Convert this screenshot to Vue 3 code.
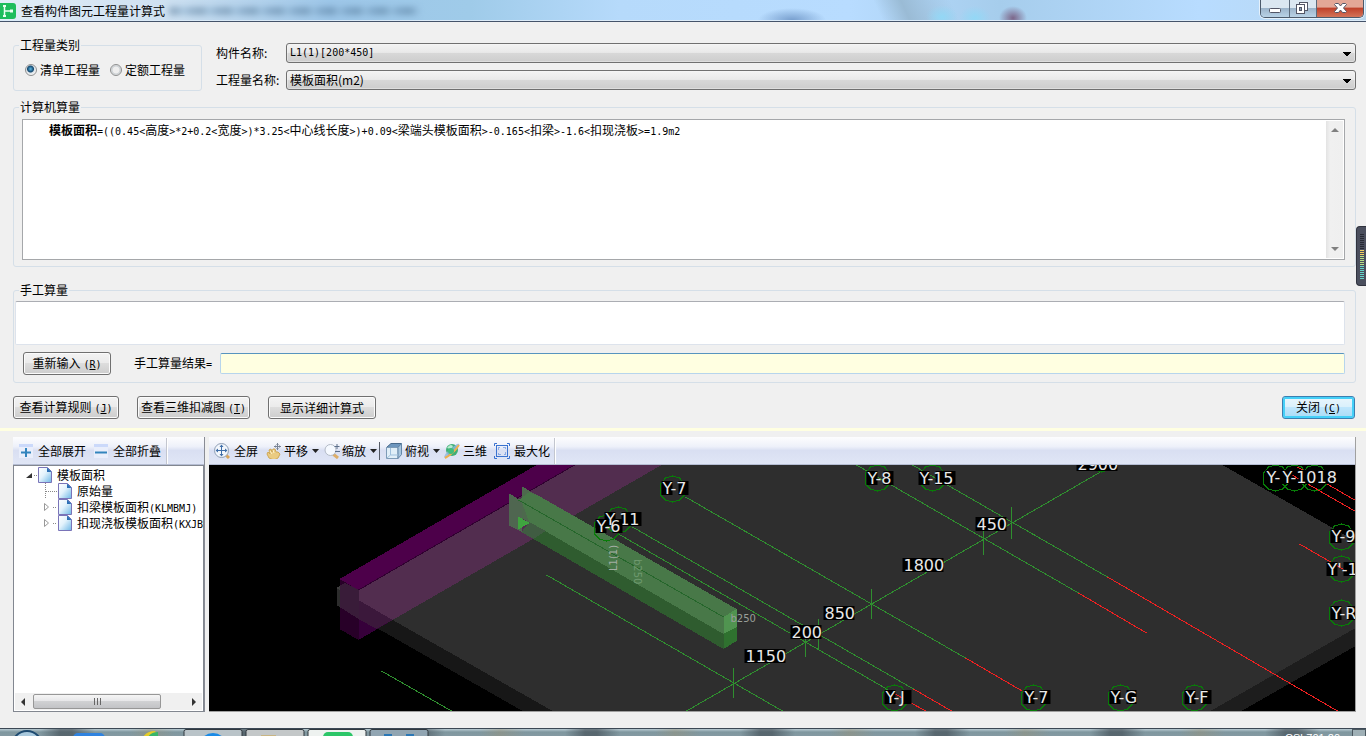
<script setup>
import { ref } from 'vue'

const kind = ref('list')
const component = ref('L1(1)[200*450]')
const quantity = ref('模板面积(m2)')
const manual = ref('')
const result = ref('')

// Splits a text into Latin and Chinese runs, so that each can take its own font.
function runs(text) {
  return (text.match(/[\x00-\x7f]+|[^\x00-\x7f]+/g) || []).map((t) => ({
    t,
    latin: t.charCodeAt(0) < 128
  }))
}

const formula = runs('=((0.45<高度>*2+0.2<宽度>)*3.25<中心线长度>)+0.09<梁端头模板面积>-0.165<扣梁>-1.6<扣现浇板>=1.9m2')

const tree = [
  { text: '原始量', leaf: true },
  { text: '扣梁模板面积(KLMBMJ)' },
  { text: '扣现浇板模板面积(KXJBMBMJ)' }
].map((n) => ({ ...n, parts: runs(n.text) }))

const greenLines = [
  [685, 497, 965, 658], [632, 527, 913, 689], [618, 534, 893, 693],
  [546, 575, 782, 711], [856, 465, 1078, 593], [912, 465, 1107, 577],
  [686, 711, 1112, 465],
  [733, 668, 733, 698], [805, 627, 805, 657], [818, 619, 818, 649],
  [871, 589, 871, 619], [983, 525, 983, 555], [1011, 507, 1011, 539]
]
const redLines = [
  [965, 658, 1032, 697], [913, 689, 951, 711], [893, 693, 925, 711],
  [1078, 593, 1146, 633], [1107, 577, 1337, 711], [1299, 544, 1356, 577],
  [1297, 467, 1356, 501], [1288, 473, 1356, 512]
]
const bubbles = [
  [673, 489], [619, 520], [607, 528], [878, 478], [933, 478], [895, 698], [1034, 698],
  [1121, 698], [1195, 698], [1342, 613], [1342, 537], [1342, 569],
  [1276, 478], [1295, 478], [1315, 478], [1102, 459]
]
const hex = (cx, cy) =>
  [[0, -13], [7, -11], [12, -5], [12, 6], [7, 11], [0, 13], [-7, 11], [-12, 6], [-12, -5], [-7, -11]]
    .map(([x, y]) => `${cx + x},${cy + y}`).join(' ')

// Each label: text, left edge, baseline
const labels = [
  ['Y-7', 663, 494], ['Y-11', 606, 525], ['Y-6', 597, 532], ['Y-8', 868, 484], ['Y-15', 920, 484],
  ['2900', 1078, 470], ['450', 977, 530], ['1800', 904, 571], ['850', 825, 619], ['200', 792, 638],
  ['1150', 746, 662], ['Y-J', 886, 703], ['Y-7', 1025, 703], ['Y-G', 1111, 703], ['Y-F', 1186, 703],
  ['Y-', 1267, 483], ['Y-1018', 1283, 483], ['Y-9', 1332, 542], ["Y'-11", 1328, 575], ['Y-R', 1332, 619]
]
function plates(text, x, y) {
  const i = text.indexOf('-')
  if (i < 0) return [{ x: x - 1, y: y - 13, w: text.length * 10 + 1 }]
  const head = { x: x - 1, y: y - 13, w: 11 }
  const rest = text.length - i - 1
  return rest ? [head, { x: x + 16, y: y - 13, w: rest * 10 }] : [head]
}
</script>

<template>
  <div class="window">
    <header class="titlebar">
      <svg class="logo" viewBox="0 0 16 16" width="16" height="16" aria-hidden="true">
        <rect x="-2" width="18" height="16" rx="3" fill="#1ebd5c" />
        <path d="M4.500 3v10M5 8h6" stroke="#eafff0" stroke-width="1.500" fill="none" />
        <path d="M3 2h3v2H3zM3 12h3v2H3zM10 6.500h3v3h-3z" fill="#eafff0" />
      </svg>
      <h1>查看构件图元工程量计算式</h1>
      <span class="ghost" aria-hidden="true"></span>
      <div class="caption">
        <button type="button" aria-label="最小化">
          <svg viewBox="0 0 28 18" width="28" height="18"><rect x="8.500" y="8.500" width="11" height="4" rx="1" fill="#fff" stroke="#535666" /></svg>
        </button>
        <button type="button" aria-label="还原">
          <svg viewBox="0 0 26 18" width="26" height="18"><g fill="#fff" stroke="#535666"><rect x="9.500" y="2.500" width="8" height="8" /><rect x="6.500" y="4.500" width="8" height="9" /><rect x="9.500" y="7.500" width="2" height="3" fill="#8ba2b8" /></g></svg>
        </button>
        <button type="button" class="x" aria-label="关闭窗口">
          <svg viewBox="0 0 46 18" width="46" height="18"><path d="M18.500 3.500h3l2 2.500 2-2.500h3l1 1-3 3.500 3 3.500-1 1h-3l-2-2.500-2 2.500h-3l-1-1 3-3.500-3-3.500z" fill="#fff" stroke="#535666" /></svg>
        </button>
      </div>
    </header>

    <main>
      <section class="top">
        <fieldset class="kind">
          <legend>工程量类别</legend>
          <label><input v-model="kind" type="radio" name="kind" value="list" />清单工程量</label>
          <label><input v-model="kind" type="radio" name="kind" value="quota" />定额工程量</label>
        </fieldset>
        <div class="names">
          <label for="component">构件名称:</label>
          <select id="component" v-model="component" class="latin"><option>L1(1)[200*450]</option></select>
          <label for="quantity">工程量名称:</label>
          <select id="quantity" v-model="quantity"><option>模板面积(m2)</option></select>
        </div>
      </section>

      <fieldset class="auto">
        <legend>计算机算量</legend>
        <div class="output">
          <p><b>模板面积</b><span v-for="(r, i) in formula" :key="i" :class="{ latin: r.latin }">{{ r.t }}</span></p>
          <div class="vscroll" aria-hidden="true">
            <svg viewBox="0 0 8 4" width="8" height="4"><path d="M0 4L4 0l4 4z" fill="#808080" /></svg>
            <svg viewBox="0 0 8 4" width="8" height="4"><path d="M0 0h8L4 4z" fill="#808080" /></svg>
          </div>
        </div>
      </fieldset>

      <fieldset class="manual">
        <legend>手工算量</legend>
        <textarea v-model="manual" aria-label="手工算量"></textarea>
        <div class="result">
          <button type="button" class="btn">重新输入<span class="latin key">(<u>R</u>)</span></button>
          <label for="result">手工算量结果<span class="latin">=</span></label>
          <input id="result" v-model="result" type="text" />
        </div>
      </fieldset>

      <div class="actions">
        <button type="button" class="btn rules">查看计算规则<span class="latin key">(<u>J</u>)</span></button>
        <button type="button" class="btn deduct">查看三维扣减图<span class="latin key">(<u>T</u>)</span></button>
        <button type="button" class="btn detail">显示详细计算式</button>
        <button type="button" class="btn close">关闭<span class="latin key">(<u>C</u>)</span></button>
      </div>
    </main>

    <div class="splitter"></div>

    <section class="panels">
      <aside class="side">
        <div class="toolbar">
          <button type="button">
            <svg viewBox="0 0 14 14" width="14" height="14"><rect width="14" height="14" fill="#e9eefb" /><rect width="14" height="3" fill="#cbd9fa" /><path d="M7 4v9M2 8.500h10" stroke="#3284bd" stroke-width="2" /></svg>全部展开
          </button>
          <button type="button">
            <svg viewBox="0 0 14 14" width="14" height="14"><rect width="14" height="14" fill="#e9eefb" /><rect width="14" height="3" fill="#cbd9fa" /><path d="M1 8.500h12" stroke="#3284bd" stroke-width="2" /></svg>全部折叠
          </button>
          <i class="edge"></i>
        </div>
        <div class="tree">
          <ul>
            <li class="root">
              <svg viewBox="0 0 14 16" width="14" height="16"><path d="M8 6v5H2z" fill="#333" /><path d="M10 8.500h4" stroke="#888" stroke-dasharray="1 1" /></svg>
              <svg viewBox="0 0 14 16" width="14" height="16"><path d="M.5.500h9l4 4v11H.500z" fill="url(#page)" stroke="#7a74b8" /><path d="M9 .5v4.500h4.500z" fill="#2c6fb5" /></svg>
              <span>模板面积</span>
            </li>
            <li v-for="(n, k) in tree" :key="k">
              <svg viewBox="0 0 14 16" width="14" height="16">
                <path v-if="n.leaf" d="M1.500 0v16M2 8.500h12" fill="none" stroke="#888" stroke-dasharray="1 1" />
                <g v-else><path d="M.5 4.500v7l4-3.500z" fill="#fff" stroke="#999" /><path d="M9 8.500h4" stroke="#888" stroke-dasharray="1 1" /></g>
              </svg>
              <svg viewBox="0 0 14 16" width="14" height="16"><path d="M.5.500h9l4 4v11H.500z" fill="url(#page)" stroke="#7a74b8" /><path d="M9 .5v4.500h4.500z" fill="#2c6fb5" /></svg>
              <span><span v-for="(r, i) in n.parts" :key="i" :class="{ latin: r.latin }">{{ r.t }}</span></span>
            </li>
          </ul>
          <div class="hscroll" aria-hidden="true">
            <svg viewBox="0 0 4 8" width="4" height="8"><path d="M4 0v8L0 4z" fill="#333" /></svg>
            <span class="thumb"><i></i><i></i><i></i></span>
            <svg viewBox="0 0 4 8" width="4" height="8"><path d="M0 0v8l4-4z" fill="#333" /></svg>
          </div>
        </div>
      </aside>

      <div class="view">
        <div class="toolbar">
          <button type="button" class="t1">
            <svg viewBox="0 0 16 16" width="16" height="16"><path d="M12 12l3 3" stroke="#d9a55a" stroke-width="3" /><circle cx="7.500" cy="7.500" r="7" fill="#f2f6fc" stroke="#8f9fb5" /><path d="M7.500 3v9M3 7.500h9" stroke="#3f6ea8" /><path d="M7.500 1.500l2 2.500h-4zM7.500 13.500l2-2.500h-4zM1.500 7.500L4 5.500v4zM13.500 7.500L11 5.500v4z" fill="#3f6ea8" /></svg>全屏
          </button>
          <button type="button" class="t2">
            <svg viewBox="0 0 16 16" width="16" height="16"><path d="M3 15L1 11l1-2 2 2-1-4 2-1 1 3 1-3 2 0 1 3 2 0 2 2-2 4-4 2z" fill="#eacb82" stroke="#cfa858" /><path d="M4 8l2 3M7 7l1 3" stroke="#fff2c8" /><path d="M11.500 0v7M8 3.500h7M10.500 1.500h2M10.500 5.500h2M9.500 2.500v2M13.500 2.500v2" stroke="#788395" fill="none" /></svg>平移
            <svg class="drop" viewBox="0 0 7 4" width="7" height="4"><path d="M0 0h7L3.500 4z" fill="#222" /></svg>
          </button>
          <button type="button" class="t3">
            <svg viewBox="0 0 16 16" width="16" height="16"><path d="M9 11l5 4" stroke="#dcae6a" stroke-width="3" /><circle cx="6.500" cy="7" r="5.500" fill="#f5f9ff" stroke="#b3bac6" /><path d="M13 1v5M10.500 3.500h5M11 8.500h5" stroke="#5c6f8a" /></svg>缩放
            <svg class="drop" viewBox="0 0 7 4" width="7" height="4"><path d="M0 0h7L3.500 4z" fill="#222" /></svg>
          </button>
          <i class="bar"></i>
          <button type="button" class="t4">
            <svg viewBox="0 0 16 16" width="16" height="16"><path d="M.5 4.500L5 .5h10.500L12 4.500z" fill="#6d96be" stroke="#47698b" /><path d="M.5 4.500H12v11H.500z" fill="#e0eef8" stroke="#7d9bb7" /><path d="M12 4.500L15.500.500v11L12 15.500z" fill="#a8c6df" stroke="#6486a8" /><path d="M4.500 5v7H12M4.500 12L1 15" stroke="#9fc0dd" fill="none" /></svg>俯视
            <svg class="drop" viewBox="0 0 7 4" width="7" height="4"><path d="M0 0h7L3.500 4z" fill="#222" /></svg>
          </button>
          <button type="button" class="t5">
            <svg viewBox="0 0 16 16" width="16" height="16"><circle cx="8" cy="7" r="6" fill="#3fae77" /><path d="M3 5q3-5 6-2-1 4-6 2" fill="#b8ebcf" /><path d="M0 14Q1 9 13 1q4-1 1 3Q8 13 1 15z" fill="#8fb8dd" opacity=".8" /><path d="M1 15Q9 11 15 2" stroke="#f0b04d" stroke-width="2" fill="none" /><circle cx="7" cy="8" r="3" fill="#3fbd7d" /></svg>三维
          </button>
          <button type="button" class="t6">
            <svg viewBox="0 0 16 16" width="16" height="16" fill="none" stroke="#3a72d0"><path d="M.5 3V.5H3M13 .5h2.500V3M15.500 13v2.500H13M3 15.500H.500V13" /><rect x="2.500" y="2.500" width="11" height="11" /><path d="M4.500 6.500v-2h2M9.500 4.500h2v2M11.500 9.500v2h-2M6.500 11.500h-2v-2" stroke-dasharray="1 1" /></svg>最大化
          </button>
          <i class="edge"></i>
        </div>

        <svg class="scene" viewBox="209 465 1147 246" preserveAspectRatio="xMidYMid slice" role="img" aria-label="三维视图">
          <defs>
            <linearGradient id="page" x2="1" y2="1"><stop offset="0" stop-color="#fff" /><stop offset=".45" stop-color="#e2f2fc" /><stop offset="1" stop-color="#6db7e6" /></linearGradient>
          </defs>
          <rect x="0" y="300" width="1800" height="600" fill="#000" />
          <g shape-rendering="crispEdges">
            <path d="M337 588L553 711H523L337 605z" fill="#171717" />
            <path d="M1356 628V646L1242 711H1211z" fill="#1d1d1d" />
            <path d="M345 583L550 465H1223L1356 541V628L1211 711H553L337 588z" fill="#2e2e2e" />
            <path d="M340 579L359 590V640L340 629z" fill="#280028" />
            <path d="M359 590L393 620L359 640z" fill="#36003a" />
            <path d="M359 600L393 620L377 629L359 619z" fill="#3b183b" />
            <path d="M359 590L575 465H662L393 620L359 600z" fill="#522d4f" />
            <path d="M340 579L537 465H575L359 590z" fill="#4d004a" />
            <path d="M359 590L575 465" stroke="#300030" />
            <path d="M337 588L345 583L359 590V619L337 605z" fill="#666" fill-opacity=".27" />

            <path d="M509 493L522 501V532L509 525z" fill="#4f6650" />
            <path d="M522 486L535 494V526L522 518z" fill="#4d694d" />
            <path d="M522 501L536 494L737 609L724 634L530 523z" fill="#487848" />
            <path d="M530 492L737 609L724 617L519 500z" fill="#487848" />
            <path d="M522 532L530 522L724 634V649z" fill="#2f5c2f" />
            <path d="M522 532L530 522L546 531L534 539z" fill="#405c42" />
            <path d="M518 516L530 523L518 530z" fill="#3fa33f" />
            <path d="M724 617L737 609V627L724 634z" fill="#509450" />
            <path d="M724 634L737 627V641L724 649z" fill="#2f712f" />
            <path d="M519 500L724 617" stroke="#25662b" />
            <g stroke="#2f8f2f" transform="translate(1 0)">
              <line v-for="(l, i) in greenLines" :key="i" :x1="l[0]" :y1="l[1]" :x2="l[2]" :y2="l[3]" />
              <line x1="381" y1="671" x2="451" y2="711" />
            </g>
            <g stroke="#f02020" transform="translate(1 0)">
              <line v-for="(l, i) in redLines" :key="i" :x1="l[0]" :y1="l[1]" :x2="l[2]" :y2="l[3]" />
            </g>
          </g>
          <g fill="none" stroke="#087c08" shape-rendering="crispEdges">
            <polygon v-for="(b, i) in bubbles" :key="i" :points="hex(b[0], b[1])" />
          </g>
          <g v-for="(l, i) in labels" :key="i">
            <rect v-for="(p, j) in plates(l[0], l[1], l[2])" :key="j" :x="p.x" :y="p.y" :width="p.w" height="14" fill="#000" />
            <text :x="l[1]" :y="l[2]" class="dim">{{ l[0] }}</text>
          </g>
          <text x="731" y="622" class="small" fill="#9a9f9a">b250</text>
          <text transform="translate(617 571) rotate(-90)" class="small" fill="#a3aea3">L1(1)</text>
          <text transform="translate(634 559) rotate(90)" class="small" fill="#6f9a6f">b250</text>
        </svg>
      </div>
    </section>

    <footer class="taskbar">
      <svg viewBox="0 0 430 8" width="430" height="8" aria-hidden="true">
        <circle cx="27" cy="17" r="15" fill="#a9c9dd" stroke="#1d4a70" stroke-width="2" />
        <rect x="73" y="4" width="32" height="16" rx="5" fill="#2f83e0" />
        <path d="M143 8q4-6 12-6l4 6z" fill="#e5cc28" /><path d="M148 8q3-5 10-5v5z" fill="#39b56a" />
        <g stroke="#30383f"><rect x="184" y=".5" width="58" height="20" rx="2" fill="#b9c3c8" /><rect x="246" y=".5" width="58" height="20" rx="2" fill="#c3c7c8" /><rect x="308" y=".5" width="58" height="20" rx="2" fill="#eef2f0" /><rect x="370" y=".5" width="58" height="20" rx="2" fill="#91a5b2" /></g>
        <circle cx="213" cy="18" r="14" fill="#198ae6" /><rect x="261" y="6" width="15" height="10" fill="#c9b583" />
        <rect x="323" y="3" width="30" height="14" rx="5" fill="#2cc668" />
        <path d="M384 5h8v3h-8zM406 5h8v3h-8z" fill="#2a77b5" />
      </svg>
      <span class="clock">CSh701:20</span>
      <i class="desktop"></i>
    </footer>

    <div class="meter" aria-hidden="true"><i v-for="n in 23" :key="n" :class="n < 9 ? 'off' : n < 12 ? 'hot' : n < 17 ? 'mid' : 'low'"></i></div>
  </div>
</template>

<style>
body { margin: 0; background: #f0f0f0; }
</style>

<style scoped>
* { box-sizing: border-box; }
.window {
  position: relative; display: flex; flex-direction: column; min-height: 100vh; overflow: hidden;
  background: #f0f0f0; color: #000; font: 12px/14px "Noto Sans CJK SC", sans-serif;
}
button, select, input, textarea { font: inherit; color: inherit; margin: 0; }
.latin { font-family: "DejaVu Sans Mono", "Noto Sans CJK SC", monospace; font-size: 10px; }

.titlebar {
  display: flex; align-items: flex-start; height: 22px; padding-right: 2px;
  border-bottom: 1px solid #45536a; box-shadow: inset 0 -1px #dcebf8;
  background:
    radial-gradient(ellipse 14px 12px at 1013px 18px, #7c6689 0, transparent 100%),
    radial-gradient(ellipse 34px 12px at 792px 20px, #789fce 0, transparent 100%),
    radial-gradient(ellipse 16px 12px at 942px 17px, #93d8f6 0, transparent 100%),
    radial-gradient(ellipse 16px 12px at 975px 18px, #93d8f6 0, transparent 100%),
    linear-gradient(65deg, transparent 800px, #9abbd5 825px, transparent 870px),
    linear-gradient(90deg, #e1edf6 0, #cfe1f1 160px, #9dc6e8 330px, #9fcbe9 470px, #b6dafb 620px, #b8dcff 850px, #a6cdec 1000px, #b8dcff 1200px, #b9d7ee 100%);
}
.logo { margin-top: 3px; }
h1 { margin: 3px 0 0 5px; font-size: 12px; line-height: 16px; font-weight: 400; white-space: nowrap; }
.ghost { width: 250px; height: 8px; margin: 7px 0 0 4px; background: repeating-linear-gradient(90deg, #4a6f90 0 9px, #7fa7c8 12px 17px, #587fa2 20px 26px); filter: blur(3px); opacity: .45; }
.caption { display: flex; margin-left: auto; height: 18px; border: 1px solid #4c5a6b; border-top: 0; border-radius: 0 0 5px 5px; overflow: hidden; box-shadow: 0 0 0 1px #e5f1fb; }
.caption button { display: flex; padding: 0; border: 0; border-right: 1px solid #5c6b7c; background: linear-gradient(#dbe7f1 0 45%, #9db5cb 50%, #b9d2e6); }
.caption .x { border-right: 0; background: linear-gradient(#e3a797 0 40%, #c0432d 50%, #d3745a); }

main { display: flex; flex-direction: column; padding: 16px 10px 9px 13px; }
fieldset { min-width: 0; margin: 0; padding: 0; border: 1px solid #d5dfe8; border-radius: 3px; }
legend { height: 14px; margin-left: 5px; padding: 0 1px; line-height: 14px; }
.top { display: flex; gap: 14px; }
.kind { flex: none; width: 189px; height: 53px; }
.kind label { display: inline-flex; align-items: center; gap: 3px; margin: 11px 0 0 11px; }
.kind label + label { margin-left: 10px; }
.kind input {
  appearance: none; width: 12px; height: 12px; border: 1px solid #8e8f8f; border-radius: 50%;
  background: radial-gradient(circle at 50% 50%, #eee 0 3px, #c9ced2 4px, #f6f6f6 6px);
}
.kind input:checked { background: radial-gradient(circle at 45% 40%, #5bb9e6 0, #14486f 3px, #dce3e8 4px, #f6f6f6 6px); }
.names { flex: 1; display: grid; grid-template-columns: 64px 1fr; grid-auto-rows: 20px; gap: 7px 6px; align-items: center; padding-top: 5px; white-space: nowrap; }
select {
  appearance: none; width: 100%; height: 20px; padding: 0 20px 0 3px; border: 1px solid #707070; border-radius: 3px; outline: 0;
  background:
    conic-gradient(from -45deg at 50% 100%, #000 90deg, transparent 0) right 4px top 8px / 8px 4px no-repeat,
    linear-gradient(#f3f3f3, #e9e9e9 47%, #d8d8d8 50%, #cdcdcd);
  background:
    linear-gradient(#000, #000) right 4px top 8px / 8px 1px no-repeat,
    linear-gradient(#000, #000) right 5px top 9px / 6px 1px no-repeat,
    linear-gradient(#000, #000) right 6px top 10px / 4px 1px no-repeat,
    linear-gradient(#000, #000) right 7px top 11px / 2px 1px no-repeat,
    linear-gradient(#f3f3f3, #e9e9e9 47%, #d8d8d8 50%, #cdcdcd);
  box-shadow: inset 0 0 0 1px #f8f8f866;
}

.auto { margin-top: 9px; padding: 5px 10px 6px 8px; }
.auto legend { margin-left: -3px; }
.output { display: flex; height: 141px; border: 1px solid #a5a7aa; background: #fff; padding: 1px; }
.output p { flex: 1; margin: 2px 0 0 25px; line-height: 14px; }
.output b { font-weight: 700; }
.vscroll { display: flex; flex-direction: column; justify-content: space-between; align-items: center; width: 17px; padding: 7px 0; background: linear-gradient(90deg, #e3e3e3, #f0f0f0 4px, #efefef); }

.manual { margin-top: 16px; padding: 4px 10px 7px 1px; }
.manual legend { margin-left: 4px; }
textarea { display: block; width: 100%; height: 44px; border: 1px solid #dde3ec; border-top-color: #abadb3; border-radius: 2px; background: #fff; resize: none; outline: 0; }
.result { display: flex; align-items: center; margin: 7px 0 0 8px; }
.result .btn { width: 88px; }
.result label { width: 86px; margin-left: 23px; white-space: nowrap; }
.result input { flex: 1; min-width: 0; height: 21px; border: 1px solid #b7d5ec; border-top-color: #5794bf; border-radius: 2px; background: #ffffe1; outline: 0; }
.btn {
  height: 23px; padding: 0; border: 1px solid #707070; border-radius: 3px; white-space: nowrap;
  background: linear-gradient(#f3f3f3, #ebebeb 48%, #dddddd 50%, #cdcdcd); box-shadow: inset 0 0 0 1px #fbfbfb;
}
.key { margin-left: 3px; }
.actions { display: flex; gap: 18px; margin-top: 13px; padding-right: 1px; }
.rules { width: 106px; }
.deduct { width: 113px; }
.detail { width: 108px; }
.close { width: 73px; margin-left: auto; border-color: #3c7fb1; background: linear-gradient(#eaf6fc, #d9f0fc 48%, #bee6fd 50%, #a9dbf5); box-shadow: inset 0 0 0 2px #45d0f8; }

.splitter { flex: none; height: 3px; background: #ffffe1; }
.panels { flex: 1; display: flex; gap: 4px; padding: 6px 10px 16px 13px; }
.side { display: flex; flex-direction: column; flex: none; width: 192px; border-right: 1px solid #898c95; }
.view { display: flex; flex-direction: column; flex: 1; min-width: 0; border-right: 1px solid #a0a0a0; border-bottom: 1px solid #a0a0a0; }
.toolbar { display: flex; align-items: center; flex: none; height: 28px; padding-top: 1px; background: linear-gradient(#fdfdfe, #eef1fa 35%, #d9dff2 50%, #e0e6f6); border-bottom: 1px solid #b5bdd3; }
.toolbar button { display: flex; align-items: center; gap: 4px; height: 24px; padding: 0; border: 0; background: none; white-space: nowrap; line-height: 16px; }
.toolbar svg { flex: none; }
.side .toolbar { padding-left: 6px; gap: 8px; }
.side .toolbar button { gap: 5px; }
.side .toolbar .edge { margin-left: -3px; }
.view .toolbar { padding-left: 5px; gap: 4px; }
.view .t1 { margin-right: 4px; }
.view .t2 { gap: 2px; }
.view .t2 .drop, .view .t3 .drop { margin-left: 2px; }
.view .t4 .drop { margin-left: 1px; }
.view .t3 { gap: 2px; margin-left: 1px; }
.view .t4 { gap: 3px; margin-left: 2px; }
.view .t5 { gap: 3px; }
.view .t6 { margin-left: 3px; }
.edge { width: 1px; height: 26px; background: #c3c6cf; box-shadow: 1px 0 #fff; }
.bar { width: 1px; height: 18px; margin-left: -2px; background: #555b66; }
.tree { flex: 1; display: flex; flex-direction: column; overflow: hidden; padding: 1px; border: 1px solid #828790; background: #fff; }
.tree ul { flex: 1; margin: 0; padding: 0; list-style: none; }
.tree li { display: flex; height: 16px; padding-left: 29px; line-height: 15px; white-space: nowrap; }
.tree li svg { flex: none; }
.tree li svg + svg { margin-right: 5px; }
.tree .root { padding-left: 9px; }
.hscroll { display: flex; align-items: center; height: 17px; padding: 0 6px; background: #f0f0f0; }
.thumb { display: flex; align-items: center; justify-content: center; gap: 2px; width: 128px; height: 15px; margin: 0 31px 0 8px; border: 1px solid #979797; border-radius: 2px; background: linear-gradient(#f5f5f5, #e6e6e8 48%, #d0d1d3 50%, #c2c3c6); }
.thumb i { width: 1px; height: 7px; background: #666; }
.scene { display: block; flex: 1 1 0; width: 100%; min-height: 200px; }
.dim { font: 16px "DejaVu Sans", sans-serif; fill: #e8e8e8; }
.small { font: 10px "DejaVu Sans", sans-serif; }

.taskbar {
  display: flex; justify-content: flex-end; flex: none; position: relative; height: 8px; overflow: hidden; border-top: 1px solid #3c4855;
  background:
    repeating-linear-gradient(90deg, transparent 0 40px, #3d474f99 60px 72px, transparent 95px 130px, #9b907266 150px, transparent 175px),
    linear-gradient(#b9cbd3, #7f979f 3px, #8499a2);
}
.taskbar svg { margin-right: auto; }
.clock { height: 7px; margin-right: 12px; padding-top: 3px; color: #fff; font: 11px/13px "Liberation Sans", sans-serif; }
.desktop { width: 14px; height: 8px; border: 1px solid #4b5860; background: #9fb0b6; }
.meter { position: absolute; right: 0; top: 226px; display: flex; flex-direction: column; align-items: flex-end; gap: 1px; width: 10px; height: 60px; padding: 7px 2px 0 0; border: 1px solid #30333e; border-right: 0; border-radius: 4px 0 0 4px; background: #4b4f5e; }
.meter i { width: 4px; height: 1px; background: #65d5c9; }
.meter .off { background: #272a34; }
.meter .hot { background: #f2cf62; }
.meter .mid { background: #b9df87; }
</style>
